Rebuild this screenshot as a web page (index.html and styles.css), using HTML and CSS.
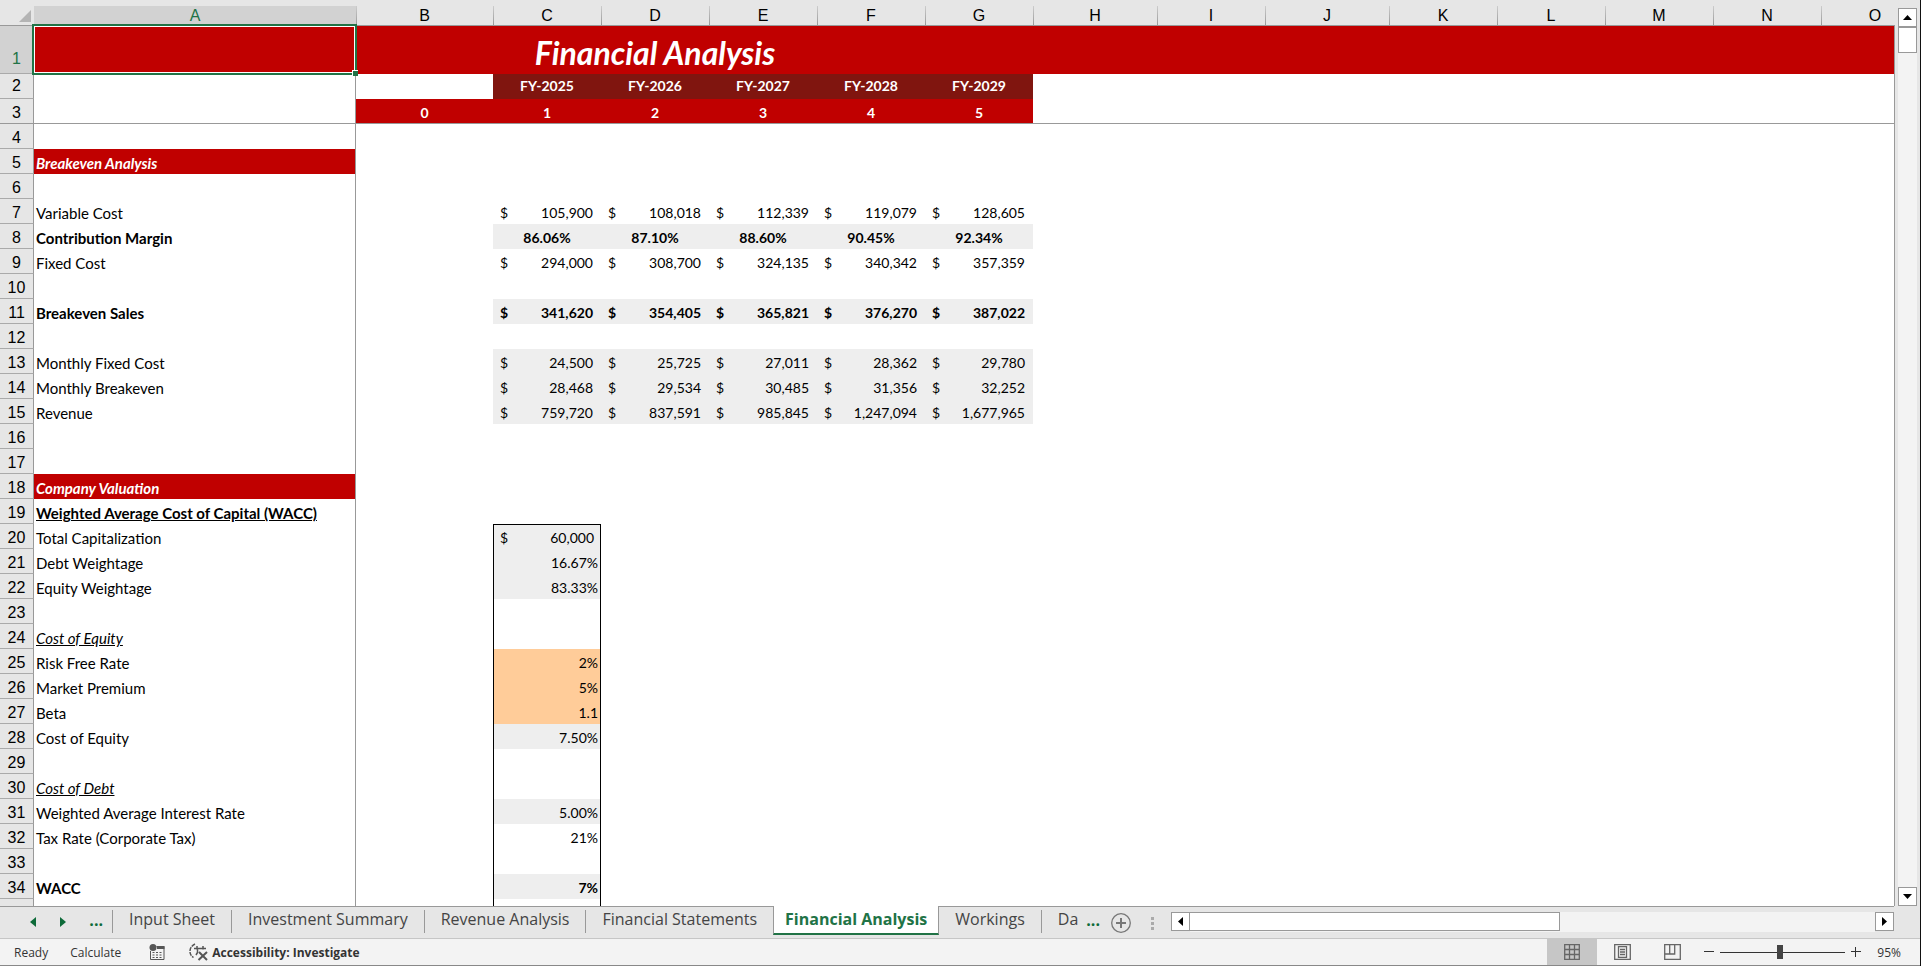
FILE: index.html
```html
<!DOCTYPE html>
<html lang="en">
<head>
    <meta charset="UTF-8">
    <meta name="viewport" content="width=device-width, initial-scale=1.0">
    <title>Financial Analysis</title>
    <link rel="stylesheet" href="styles.css">
</head>
<body>
    <main class="sheet">
        <div class="grid">
            <table>
                <colgroup>
                    <col class="w-num"><col class="w-a"><col class="w-b">
                    <col class="w-std"><col class="w-std"><col class="w-std"><col class="w-std"><col class="w-std">
                    <col class="w-wide"><col class="w-std"><col class="w-wide"><col class="w-std"><col class="w-std">
                    <col class="w-std"><col class="w-std"><col class="w-std">
                </colgroup>
                <thead>
                    <tr>
                        <th class="corner"><svg width="12" height="12" viewBox="0 0 12 12"><path d="M12 0v12H0z" fill="#b4b4b4"/></svg></th>
                        <th class="selected">A</th><th>B</th><th>C</th><th>D</th><th>E</th><th>F</th><th>G</th><th>H</th>
                        <th>I</th><th>J</th><th>K</th><th>L</th><th>M</th><th>N</th><th>O</th>
                    </tr>
                </thead>
                <tbody>
                    <tr class="title">
                        <th class="selected">1</th>
                        <td class="active-cell"><span class="selection"></span><span class="handle"></span></td>
                        <td></td><td colspan="3" class="title-text">Financial Analysis</td><td colspan="10"></td>
                    </tr>
                    <tr class="years">
                        <th>2</th><td></td><td></td>
                        <td class="fy">FY-2025</td><td class="fy">FY-2026</td><td class="fy">FY-2027</td><td class="fy">FY-2028</td><td class="fy">FY-2029</td>
                        <td colspan="8"></td>
                    </tr>
                    <tr class="periods">
                        <th>3</th><td></td><td class="red">0</td>
                        <td class="red">1</td><td class="red">2</td><td class="red">3</td><td class="red">4</td><td class="red">5</td>
                        <td colspan="8"></td>
                    </tr>
                    <tr><th>4</th><td></td><td colspan="14"></td></tr>
                    <tr><th>5</th><td class="section">Breakeven Analysis</td><td colspan="14"></td></tr>
                    <tr><th>6</th><td></td><td colspan="14"></td></tr>
                    <tr>
                        <th>7</th><td>Variable Cost</td><td></td>
                        <td class="money"><div><span>$</span>105,900</div></td>
                        <td class="money"><div><span>$</span>108,018</div></td>
                        <td class="money"><div><span>$</span>112,339</div></td>
                        <td class="money"><div><span>$</span>119,079</div></td>
                        <td class="money"><div><span>$</span>128,605</div></td>
                        <td colspan="8"></td>
                    </tr>
                    <tr class="bold">
                        <th>8</th><td>Contribution Margin</td><td></td>
                        <td class="calc center">86.06%</td><td class="calc center">87.10%</td><td class="calc center">88.60%</td>
                        <td class="calc center">90.45%</td><td class="calc center">92.34%</td>
                        <td colspan="8"></td>
                    </tr>
                    <tr>
                        <th>9</th><td>Fixed Cost</td><td></td>
                        <td class="money"><div><span>$</span>294,000</div></td>
                        <td class="money"><div><span>$</span>308,700</div></td>
                        <td class="money"><div><span>$</span>324,135</div></td>
                        <td class="money"><div><span>$</span>340,342</div></td>
                        <td class="money"><div><span>$</span>357,359</div></td>
                        <td colspan="8"></td>
                    </tr>
                    <tr><th>10</th><td></td><td colspan="14"></td></tr>
                    <tr class="bold">
                        <th>11</th><td>Breakeven Sales</td><td></td>
                        <td class="calc money"><div><span>$</span>341,620</div></td>
                        <td class="calc money"><div><span>$</span>354,405</div></td>
                        <td class="calc money"><div><span>$</span>365,821</div></td>
                        <td class="calc money"><div><span>$</span>376,270</div></td>
                        <td class="calc money"><div><span>$</span>387,022</div></td>
                        <td colspan="8"></td>
                    </tr>
                    <tr><th>12</th><td></td><td colspan="14"></td></tr>
                    <tr>
                        <th>13</th><td>Monthly Fixed Cost</td><td></td>
                        <td class="calc money"><div><span>$</span>24,500</div></td>
                        <td class="calc money"><div><span>$</span>25,725</div></td>
                        <td class="calc money"><div><span>$</span>27,011</div></td>
                        <td class="calc money"><div><span>$</span>28,362</div></td>
                        <td class="calc money"><div><span>$</span>29,780</div></td>
                        <td colspan="8"></td>
                    </tr>
                    <tr>
                        <th>14</th><td>Monthly Breakeven</td><td></td>
                        <td class="calc money"><div><span>$</span>28,468</div></td>
                        <td class="calc money"><div><span>$</span>29,534</div></td>
                        <td class="calc money"><div><span>$</span>30,485</div></td>
                        <td class="calc money"><div><span>$</span>31,356</div></td>
                        <td class="calc money"><div><span>$</span>32,252</div></td>
                        <td colspan="8"></td>
                    </tr>
                    <tr>
                        <th>15</th><td>Revenue</td><td></td>
                        <td class="calc money"><div><span>$</span>759,720</div></td>
                        <td class="calc money"><div><span>$</span>837,591</div></td>
                        <td class="calc money"><div><span>$</span>985,845</div></td>
                        <td class="calc money"><div><span>$</span>1,247,094</div></td>
                        <td class="calc money"><div><span>$</span>1,677,965</div></td>
                        <td colspan="8"></td>
                    </tr>
                    <tr><th>16</th><td></td><td colspan="14"></td></tr>
                    <tr><th>17</th><td></td><td colspan="14"></td></tr>
                    <tr><th>18</th><td class="section">Company Valuation</td><td colspan="14"></td></tr>
                    <tr class="bold"><th>19</th><td><u>Weighted Average Cost of Capital (WACC)</u></td><td colspan="14"></td></tr>
                    <tr><th>20</th><td>Total Capitalization</td><td></td><td class="box box-top calc money"><div><span>$</span>60,000</div></td><td colspan="12"></td></tr>
                    <tr><th>21</th><td>Debt Weightage</td><td></td><td class="box calc">16.67%</td><td colspan="12"></td></tr>
                    <tr><th>22</th><td>Equity Weightage</td><td></td><td class="box calc">83.33%</td><td colspan="12"></td></tr>
                    <tr><th>23</th><td></td><td></td><td class="box"></td><td colspan="12"></td></tr>
                    <tr><th>24</th><td><em>Cost of Equity</em></td><td></td><td class="box"></td><td colspan="12"></td></tr>
                    <tr><th>25</th><td>Risk Free Rate</td><td></td><td class="box input">2%</td><td colspan="12"></td></tr>
                    <tr><th>26</th><td>Market Premium</td><td></td><td class="box input">5%</td><td colspan="12"></td></tr>
                    <tr><th>27</th><td>Beta</td><td></td><td class="box input">1.1</td><td colspan="12"></td></tr>
                    <tr><th>28</th><td>Cost of Equity</td><td></td><td class="box calc">7.50%</td><td colspan="12"></td></tr>
                    <tr><th>29</th><td></td><td></td><td class="box"></td><td colspan="12"></td></tr>
                    <tr><th>30</th><td><em>Cost of Debt</em></td><td></td><td class="box"></td><td colspan="12"></td></tr>
                    <tr><th>31</th><td>Weighted Average Interest Rate</td><td></td><td class="box calc">5.00%</td><td colspan="12"></td></tr>
                    <tr><th>32</th><td>Tax Rate (Corporate Tax)</td><td></td><td class="box">21%</td><td colspan="12"></td></tr>
                    <tr><th>33</th><td></td><td></td><td class="box"></td><td colspan="12"></td></tr>
                    <tr class="bold"><th>34</th><td>WACC</td><td></td><td class="box calc">7%</td><td colspan="12"></td></tr>
                    <tr><th></th><td></td><td></td><td class="box"></td><td colspan="12"></td></tr>
                </tbody>
            </table>
        </div>
        <div class="vbar">
            <button class="scroll-btn" aria-label="Scroll up"><svg width="9" height="5" viewBox="0 0 9 5"><path d="M0 5h9L4.500 0z"/></svg></button>
            <div class="vtrack"><div class="vthumb"></div></div>
            <button class="scroll-btn" aria-label="Scroll down"><svg width="9" height="5" viewBox="0 0 9 5"><path d="M0 0h9L4.500 5z"/></svg></button>
        </div>
    </main>

    <nav class="tabs">
        <div class="tab-nav">
            <button aria-label="Previous sheet"><svg width="6" height="10" viewBox="0 0 6 10"><path d="M6 0v10L0 5z"/></svg></button>
            <button aria-label="Next sheet"><svg width="6" height="10" viewBox="0 0 6 10"><path d="M0 0v10l6-5z"/></svg></button>
            <button class="more">...</button>
        </div>
        <button class="tab">Input Sheet</button>
        <button class="tab">Investment Summary</button>
        <button class="tab">Revenue Analysis</button>
        <button class="tab no-line">Financial Statements</button>
        <button class="tab active">Financial Analysis</button>
        <button class="tab">Workings</button>
        <button class="tab last">Da</button>
        <button class="more">...</button>
        <button class="add" aria-label="New sheet">
            <svg width="20" height="20" viewBox="0 0 20 20" fill="none" stroke="#777"><circle cx="10" cy="10" r="9.300" stroke-width="1.300"/><path d="M10 5v10M5 10h10" stroke-width="2"/></svg>
        </button>
        <svg class="grip" width="3" height="13" viewBox="0 0 3 13" fill="#aaa"><path d="M0 0h3v3H0zM0 5h3v3H0zM0 10h3v3H0z"/></svg>
        <div class="hbar">
            <button class="scroll-btn" aria-label="Scroll left"><svg width="5" height="9" viewBox="0 0 5 9"><path d="M5 0v9L0 4.500z"/></svg></button>
            <div class="htrack"><div class="hthumb"></div></div>
            <button class="scroll-btn" aria-label="Scroll right"><svg width="5" height="9" viewBox="0 0 5 9"><path d="M0 0v9l5-4.500z"/></svg></button>
        </div>
    </nav>

    <footer class="status">
        <span class="ready">Ready</span>
        <span class="calculate">Calculate</span>
        <button class="macro" aria-label="Record macro">
            <svg width="16" height="16" viewBox="0 0 16 16">
                <path d="M7.500 2.500h7.500v13H1.500V7" fill="none" stroke="#555"/>
                <path d="M8 2h7.500v3H8z" fill="#555"/>
                <circle cx="4" cy="3.500" r="3.500" fill="#555"/>
                <path d="M3.500 8.500h10M3.500 11h10M3.500 13.500h10" stroke="#555" stroke-dasharray="2 1.500"/>
            </svg>
        </button>
        <button class="a11y">
            <svg width="20" height="18" viewBox="0 0 20 18" fill="none" stroke="#555" stroke-width="1.500">
                <path d="M6 1C2 3 .8 6 1 9s1.500 4 3.500 5.500" stroke-dasharray="4 1"/>
                <path d="M5 5.500h12M8 3v3.500M14 3v3.500M8.500 6.500v3L7 12" />
                <path d="M10 9l8 8M18 9l-8.500 8" stroke-width="2"/>
            </svg>
            Accessibility: Investigate
        </button>
        <div class="views">
            <button class="current" aria-label="Normal view"><svg width="16" height="16" viewBox="0 0 16 16" fill="none" stroke="#666" stroke-width="1.300"><path d="M.7.7h14.600v14.600H.7zM.7 5.500h14.600M.7 10.500h14.600M5.500.7v14.600M10.500.7v14.600"/></svg></button>
            <button aria-label="Page layout"><svg width="17" height="16" viewBox="0 0 17 16" fill="none" stroke="#666" stroke-width="1.300"><path d="M.7.7h15.600v14.600H.7zM4.500 2.700h8v10.600h-8zM6 5.500h5M6 8h5M6 10.500h5"/></svg></button>
            <button aria-label="Page break preview"><svg width="17" height="16" viewBox="0 0 17 16" fill="none" stroke="#666" stroke-width="1.300"><path d="M.7.7h15.600v14.600H.7zM.7 10h10V.7M5.700.7V10"/></svg></button>
        </div>
        <div class="zoom">
            <button aria-label="Zoom out"><svg width="10" height="10" viewBox="0 0 10 10" stroke="#333"><path d="M0 4.500h10"/></svg></button>
            <input type="range" min="0" max="200" value="95" aria-label="Zoom">
            <button aria-label="Zoom in"><svg width="10" height="10" viewBox="0 0 10 10" stroke="#333"><path d="M0 4.500h10M4.500 0v10"/></svg></button>
            <span>95%</span>
        </div>
    </footer>
</body>
</html>
```
FILE: styles.css
```css
* {
    box-sizing: border-box;
}
body {
    margin: 0;
    height: 100vh;
    display: flex;
    flex-direction: column;
    overflow: hidden;
    background-color: #e6e6e6;
    border-right: 1px solid #111;
    font-family: "Open Sans", sans-serif;
    color: #333;
}
button {
    padding: 0;
    border: none;
    background: none;
    font: inherit;
    color: inherit;
    display: flex;
    align-items: center;
    justify-content: center;
}

/* sheet */
.sheet {
    flex: 1;
    min-height: 0;
    display: flex;
}
.grid {
    flex: 1;
    min-width: 0;
    overflow: hidden;
    background-color: #fff;
}
table {
    width: 1929px;
    table-layout: fixed;
    border-collapse: separate;
    border-spacing: 0;
    font-family: Lato, sans-serif;
    font-size: 14px;
    line-height: 18px;
    color: #000;
}
.w-num { width: 34px; }
.w-a { width: 322px; }
.w-b { width: 137px; }
.w-std { width: 108px; }
.w-wide { width: 124px; }

th {
    padding: 0;
    background-color: #e6e6e6;
    font-family: "Liberation Sans", Arial, sans-serif;
    font-size: 16px;
    font-weight: normal;
    vertical-align: bottom;
}
thead th {
    height: 26px;
    border-bottom: 1px solid #999;
    background-image: linear-gradient(#ccc, #999);
    background-size: 1px 19px;
    background-position: left bottom;
    background-repeat: no-repeat;
}
thead .corner {
    padding: 0 3px 3px 0;
    text-align: right;
    line-height: 0;
    background-image: none;
}
thead .selected {
    background-image: linear-gradient(#e6e6e6 6px, #d2d2d2 6px);
    background-size: 100% 100%;
    color: #217346;
}
tbody th {
    height: 25px;
    padding-bottom: 1px;
    border-right: 1px solid #999;
    border-bottom: 1px solid #aaa;
}
tbody .selected {
    background-color: #d2d2d2;
    color: #217346;
}
td {
    height: 25px;
    padding: 0 2px 2px;
    vertical-align: bottom;
    white-space: nowrap;
}
/* labels, with the frozen pane edge on their right */
tbody td:nth-child(2) {
    border-right: 1px solid #999;
    font-size: 15px;
}
.periods th,
.periods td {
    border-bottom: 1px solid #999;
}
.years th {
    padding-bottom: 3px;
}

.title th {
    height: 48px;
    padding-bottom: 5px;
}
.title td {
    background-color: #c00000;
}
.title .title-text {
    padding-bottom: 3px;
    text-align: center;
    font-size: 32px;
    line-height: 36px;
    font-weight: bold;
    font-style: italic;
    color: #fff;
}
.active-cell {
    position: relative;
}
.selection {
    position: absolute;
    inset: -2px -2px -1px -2px;
    border: 2px solid #217346;
    box-shadow: inset 0 0 0 1px #fff;
}
.handle {
    position: absolute;
    right: -3px;
    bottom: -2px;
    width: 6px;
    height: 6px;
    background-color: #217346;
    border-top: 1px solid #fff;
    border-left: 1px solid #fff;
}
.fy,
.red {
    text-align: center;
    font-weight: bold;
    color: #fff;
}
.fy {
    padding-bottom: 4px;
    background-color: #80150f;
}
.red {
    padding-bottom: 1px;
    background-color: #c00000;
}
.section {
    background-color: #c00000;
    color: #fff;
    font-weight: bold;
    font-style: italic;
}
.bold td {
    font-weight: bold;
}
em {
    text-decoration: underline;
}
.calc {
    background-color: #eee;
}
.center {
    text-align: center;
}
.money {
    padding: 0 8px 2px 7px;
}
.money div {
    display: flex;
    justify-content: space-between;
}
.box {
    border-left: 1px solid #000;
    border-right: 1px solid #000;
    text-align: right;
}
.box.money {
    padding: 0 6px 2px;
}
.box-top {
    border-top: 1px solid #000;
}
.input {
    background-color: #ffcc99;
}

/* scrollbars */
.vbar {
    width: 26px;
    padding: 8px 3px 0 4px;
    display: flex;
    flex-direction: column;
    background: linear-gradient(#999, #999) 0 25px / 1px 100% no-repeat;
}
.scroll-btn {
    flex: none;
    width: 19px;
    height: 19px;
    background-color: #fff;
    border: 1px solid #999;
}
.vtrack,
.htrack {
    flex: 1;
    background-color: #f3f3f3;
}
.vthumb {
    height: 26px;
    background-color: #fff;
    border: 1px solid #999;
}
.hbar {
    flex: 1;
    display: flex;
    margin: 6px 26px 6px 17px;
}
.hthumb {
    width: 54%;
    height: 19px;
    background-color: #fff;
    border: 1px solid #999;
    border-left: none;
}

/* sheet tabs */
.tabs {
    height: 32px;
    display: flex;
    background: linear-gradient(#999, #999) 0 0 / calc(100% - 26px) 1px no-repeat;
    font-size: 16px;
    color: #444;
}
.tab-nav {
    width: 113px;
    padding: 0 9px 0 30px;
    margin: 4px 0 5px;
    display: flex;
    justify-content: space-between;
    border-right: 1px solid #999;
    fill: #0e6b3a;
}
.more {
    color: #0e6b3a;
    font-weight: bold;
    padding-bottom: 4px;
}
.tab {
    margin: 4px 0 5px;
    padding: 0 16px 5px;
    border-right: 1px solid #999;
}
.tab.no-line {
    border-right: none;
}
.tab.last {
    padding-right: 8px;
    border-right: none;
}
.tab.active {
    margin: 0 0 3px;
    padding: 0 11px 2px;
    background-color: #fff;
    border-left: 1px solid #999;
    border-bottom: 2px solid #217346;
    font-weight: bold;
    color: #217346;
}
.add {
    margin-left: 11px;
    padding-top: 2px;
}
.grip {
    margin: 11px 0 0 20px;
}

/* status bar */
.status {
    height: 28px;
    display: flex;
    align-items: center;
    background-color: #f3f3f3;
    border-top: 1px solid #c6c6c6;
    border-bottom: 1px solid #888;
    font-size: 12px;
}
.ready {
    margin-left: 14px;
}
.calculate {
    margin-left: 22px;
}
.macro {
    margin-left: 28px;
}
.a11y {
    margin-left: 24px;
    gap: 3px;
    font-weight: bold;
}
.views {
    align-self: stretch;
    margin-left: auto;
    display: flex;
}
.views button {
    width: 50px;
}
.views .current {
    background-color: #c6c6c6;
}
.zoom {
    display: flex;
    align-items: center;
    gap: 6px;
    padding: 0 19px 0 7px;
}
.zoom span {
    margin-left: 10px;
}
.zoom input {
    -webkit-appearance: none;
    appearance: none;
    width: 125px;
    height: 14px;
    margin: 0;
    background: linear-gradient(#333, #333) center / 100% 1px no-repeat;
}
.zoom input::-webkit-slider-thumb {
    -webkit-appearance: none;
    width: 6px;
    height: 14px;
    background-color: #444;
}
```
